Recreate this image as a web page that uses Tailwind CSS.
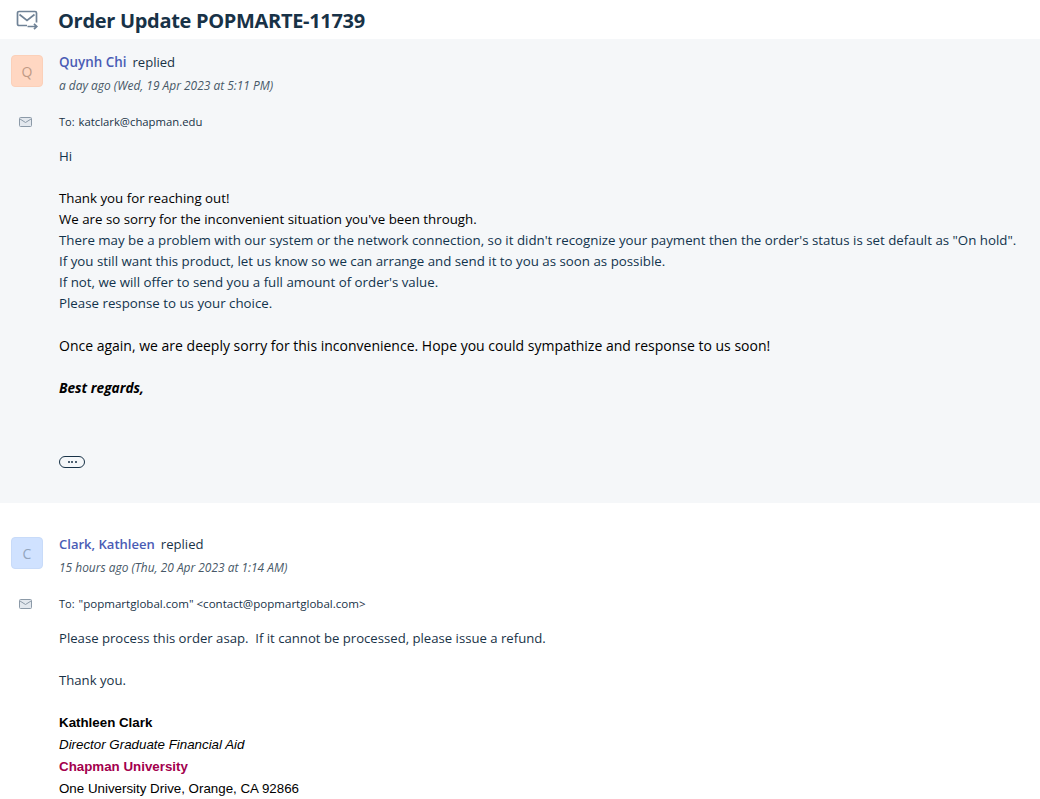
<!DOCTYPE html>
<html lang="en">
<head>
    <meta charset="UTF-8" />
    <title>Order Update</title>
    <script src="https://cdn.jsdelivr.net/npm/@tailwindcss/browser@4"></script>
</head>
<body class="bg-white text-[#183247] font-['Open_Sans','Noto_Sans',sans-serif] overflow-hidden">
    <!-- Header -->
    <header class="flex items-center h-[39px] pl-[16px] gap-[20px]">
        <svg class="w-[22px] h-[20px] mt-[1px]" viewBox="0 0 22 20" fill="none" stroke="#6f8296" stroke-width="1.7">
            <path d="M11 15.500H3A1.500 1.500 0 0 1 1.500 14V3A1.500 1.500 0 0 1 3 1.500H19A1.500 1.500 0 0 1 20.500 3V12.500" />
            <path d="M3.500 4.500l7.500 6 7.500-6" />
            <path d="M11.500 16.500H20.500M18 13.800l2.800 2.700-2.800 2.700" />
        </svg>
        <h1 class="text-[20px] font-bold tracking-[-0.31px] whitespace-nowrap mt-[2px]">Order Update POPMARTE-11739</h1>
    </header>

    <!-- First reply -->
    <section class="bg-[#f5f7f9] h-[464px] flex flex-col pt-[16px] text-[13.3px]">
        <div class="flex">
            <div class="w-[59px] shrink-0 pl-[11px]">
                <div class="w-[32px] h-[32px] rounded-[4px] border border-[#fbd0b9] bg-[#ffd7c2] text-[#c09a85] text-[14px] flex items-center justify-center">Q</div>
            </div>
            <div>
                <p class="h-[21px] leading-[14px]"><span class="font-semibold text-[#4a5cb5] text-[13.4px]">Quynh Chi</span><span class="ml-[6px] text-[13.1px]">replied</span></p>
                <p class="text-[11.95px] italic text-[#475867] leading-[18px] mt-[1px]">a day ago (Wed, 19 Apr 2023 at 5:11 PM)</p>
            </div>
        </div>
        <div class="flex items-center mt-[18px] h-[18px]">
            <div class="w-[59px] shrink-0 pl-[19px]">
                <svg class="w-[13px] h-[10px] block" viewBox="0 0 13 10" fill="#e3e8ee" stroke="#8c9aa8"><rect x="0.500" y="0.500" width="12" height="9" rx="1" /><path d="M1 2l5.500 3.500L12 2" fill="none" /></svg>
            </div>
            <p class="text-[11.3px]"><span class="font-medium text-[11px] mr-[1px]">To:</span> katclark@chapman.edu</p>
        </div>
        <div class="pl-[59px] mt-[15px] leading-[21px] text-[#12344d] whitespace-nowrap">
            <p>Hi</p>
            <p class="h-[21px]"></p>
            <p class="text-black">Thank you for reaching out!</p>
            <p class="text-black">We are so sorry for the inconvenient situation you've been through.</p>
            <p>There may be a problem with our system or the network connection, so it didn't recognize your payment then the order's status is set default as "On hold".</p>
            <p>If you still want this product, let us know so we can arrange and send it to you as soon as possible.</p>
            <p>If not, we will offer to send you a full amount of order's value.</p>
            <p>Please response to us your choice.</p>
            <p class="h-[21px]"></p>
            <p class="text-black text-[14px]">Once again, we are deeply sorry for this inconvenience. Hope you could sympathize and response to us soon!</p>
            <p class="h-[21px]"></p>
            <p class="text-black font-bold italic text-[13.7px]">Best regards,</p>
            <div class="w-[26px] h-[12px] mt-[58px] rounded-full border border-[#183247] flex items-center justify-center gap-[1.500px]">
                <span class="w-[2px] h-[2px] bg-[#183247] rounded-full"></span>
                <span class="w-[2px] h-[2px] bg-[#183247] rounded-full"></span>
                <span class="w-[2px] h-[2px] bg-[#183247] rounded-full"></span>
            </div>
        </div>
    </section>

    <!-- Second reply -->
    <section class="flex flex-col pt-[34px] text-[13.15px]">
        <div class="flex">
            <div class="w-[59px] shrink-0 pl-[11px]">
                <div class="w-[32px] h-[32px] rounded-[4px] border border-[#c8dbf9] bg-[#d0e2ff] text-[#93a5bd] text-[14px] flex items-center justify-center">C</div>
            </div>
            <div>
                <p class="h-[21px] leading-[14px]"><span class="font-semibold text-[#4a5cb5] text-[13.05px]">Clark, Kathleen</span><span class="ml-[6px] text-[13.1px]">replied</span></p>
                <p class="text-[11.95px] italic text-[#475867] leading-[18px] mt-[1px]">15 hours ago (Thu, 20 Apr 2023 at 1:14 AM)</p>
            </div>
        </div>
        <div class="flex items-center mt-[18px] h-[18px]">
            <div class="w-[59px] shrink-0 pl-[19px]">
                <svg class="w-[13px] h-[10px] block" viewBox="0 0 13 10" fill="#e3e8ee" stroke="#8c9aa8"><rect x="0.500" y="0.500" width="12" height="9" rx="1" /><path d="M1 2l5.500 3.500L12 2" fill="none" /></svg>
            </div>
            <p class="text-[11.55px]"><span class="font-medium text-[11px] mr-[1px]">To:</span> "popmartglobal.com" &lt;contact@popmartglobal.com&gt;</p>
        </div>
        <div class="pl-[59px] mt-[15px] leading-[21px] whitespace-nowrap">
            <p class="whitespace-pre">Please process this order asap.  If it cannot be processed, please issue a refund.</p>
            <p class="h-[21px]"></p>
            <p>Thank you.</p>
            <p class="h-[21px]"></p>
            <div class="font-['Liberation_Sans',Arial,sans-serif] text-black text-[13.33px] leading-[22px]">
                <p class="font-bold">Kathleen Clark</p>
                <p class="italic">Director Graduate Financial Aid</p>
                <p class="font-bold text-[#a3004d]">Chapman University</p>
                <p>One University Drive, Orange, CA 92866</p>
            </div>
        </div>
    </section>
</body>
</html>
